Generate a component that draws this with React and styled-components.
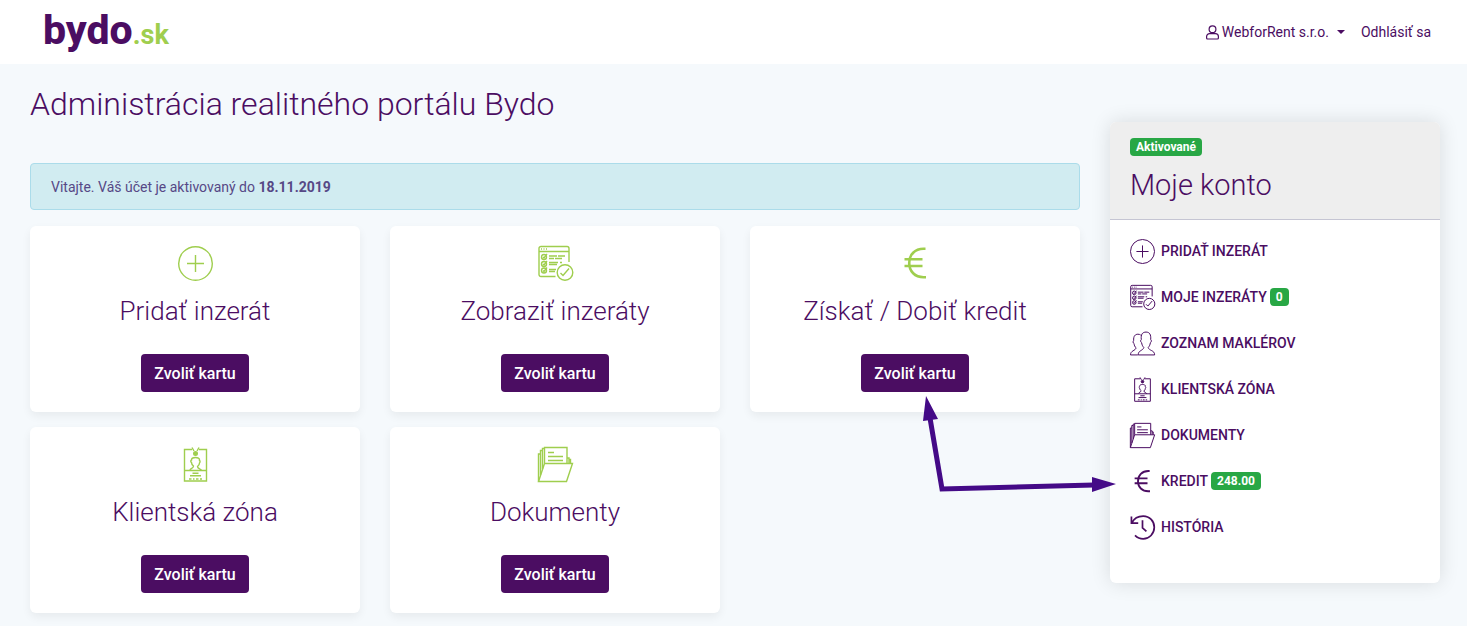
import React from 'react'
import styled, { createGlobalStyle } from 'styled-components'

const cards = [
  { id: 1, title: 'Pridať inzerát', icon: 'plus' },
  { id: 2, title: 'Zobraziť inzeráty', icon: 'list' },
  { id: 3, title: 'Získať / Dobiť kredit', icon: 'euro' },
  { id: 4, title: 'Klientská zóna', icon: 'badge' },
  { id: 5, title: 'Dokumenty', icon: 'folder' },
];

const menu = [
  { id: 1, label: 'Pridať inzerát', icon: 'plus' },
  { id: 2, label: 'Moje inzeráty', icon: 'list', count: '0' },
  { id: 3, label: 'Zoznam maklérov', icon: 'people' },
  { id: 4, label: 'Klientská zóna', icon: 'badge' },
  { id: 5, label: 'Dokumenty', icon: 'folder' },
  { id: 6, label: 'Kredit', icon: 'euro', count: '248.00' },
  { id: 7, label: 'História', icon: 'history' },
];

const shapes = {
  plus: (
    <>
      <circle cx="17.5" cy="17.5" r="16.8" />
      <path d="M17.5 9v17M9 17.5h17" />
    </>
  ),
  list: (
    <>
      <path d="M17.5 30.5H3a2 2 0 0 1-2-2v-26a2 2 0 0 1 2-2h26a2 2 0 0 1 2 2V16" />
      <path d="M1 5.5h30M3 3h1M5.5 3h1M8 3h1" />
      <circle cx="6" cy="11" r="2.5" />
      <circle cx="6" cy="18" r="2.5" />
      <circle cx="6" cy="24.5" r="2.5" />
      <path d="M5 11l1 1 3-4M5 18l1 1 3-4M5 24.5l1 1 3-4" />
      <path d="M11 10h8M20 10h7M11 12.5h5M17 12.5h7M11 16.5h9M22 16.5h2M11 18.5h8M11 23.5h7M11 25.5h6" />
      <circle cx="27" cy="26.5" r="7.8" />
      <path d="M22.5 27l2.5 2.5 6-7" />
    </>
  ),
  euro: (
    <path
      strokeWidth="2.6"
      d="M27.5 2.8h-2C17 2.8 11.2 8.5 11.2 17S17 31.2 25.5 31.2H28M6.5 13.2h18M6.5 20h18"
    />
  ),
  badge: (
    <>
      <path d="M14 2.5H6.5V34h22V2.5H21M6.5 23.5h22" />
      <path d="M14 .5l2 3.5M21 .5L19 4" />
      <circle cx="17.5" cy="6.5" r="1.8" fill="currentColor" />
      <path d="M12 23c.5-2 3.500-1.500 3.500-4-1.500-1-2-2-2-3.500-1.200-.5-.8-2.500 0-2.500 0-2 2-2.500 4-2.500s4.500.5 4 3c1 .5.500 2 0 2.500 0 1.500-.8 2.500-2 3.500 0 2.500 3.500 2 4 4" />
      <path d="M14.5 26.3h6M12 28.8h11M11 32h2.5M15 32h1.5M18 32h2.5M22 32h2" />
    </>
  ),
  folder: (
    <>
      <path d="M6.5 16.500h28l-6 18H.5zM6.500 16.500V.5H29v16" />
      <path d="M.5 34.500V7h2M2.500 28V3.500h2M4.500 22V1.500h2M29 11h2v5M31 12.500h1.500v4" />
      <path d="M10 5.5h6M10 9.5h15M10 13.5h15" />
    </>
  ),
  people: (
    <>
      <path d="M11.500 33.500h23c0-7-8-5.500-9-10.500 2-2 2.600-4 3-6.500 1.500-.5 2-4 .5-4.500C29.500 5 27.500 1.500 22.500 1.500S15 4.500 15.800 12c-1.500.5-1 4 .5 4.500.4 2.500 1 4.500 3 6.500-1 5-7.800 3.500-7.800 10.500z" />
      <path d="M11 33.500H.7c0-6.500 7-5.500 7.800-10-2-1.500-2.500-3.500-2.800-6-1.700-.5-2-3.500-.5-4C4.500 7 7.500 4.500 11 4.500c1.500 0 3 .3 4 1.200" />
    </>
  ),
  history: (
    <path
      strokeWidth="2.4"
      d="M2 2v9.500h9.500M2.500 11C5.500 5 11.500 1.500 18.500 1.500c9 0 15.500 7 15.500 15.800S27 33.500 18.500 33.500c-4.500 0-8.500-2-11.500-5M17.500 7.500V18l5.500 5"
    />
  ),
};

function Icon({ name, size }) {
  return (
    <IconSvg viewBox="0 0 35 35" $size={size} aria-hidden="true">
      {shapes[name]}
    </IconSvg>
  )
}

function Card({ card }) {
  return (
    <CardBox>
      <Icon name={card.icon} size={35} />
      <h2>{card.title}</h2>
      <CardButton type="button">Zvoliť kartu</CardButton>
    </CardBox>
  )
}

function Sidebar() {
  return (
    <SidebarBox>
      <SidebarHeader>
        <Badge>Aktivované</Badge>
        <h2>Moje konto</h2>
      </SidebarHeader>
      <Menu>
        {menu.map((item) => (
          <li key={item.id}>
            <MenuLink href="#">
              <Icon name={item.icon} size={25} />
              <span>{item.label}</span>
              {item.count && <Badge>{item.count}</Badge>}
            </MenuLink>
          </li>
        ))}
      </Menu>
    </SidebarBox>
  )
}

function App() {
  return (
    <>
      <GlobalStyle />
      <Header>
        <Logo href="#">bydo<span>.sk</span></Logo>
        <Nav>
          <UserButton type="button">
            <svg width="13" height="15" viewBox="0 0 13 15" fill="none" stroke="currentColor" strokeWidth="1.2" aria-hidden="true">
              <circle cx="6.5" cy="4.2" r="3.4" />
              <path d="M3.6 8.6h5.8a3 3 0 0 1 3 3V13a1 1 0 0 1-1 1H1.600a1 1 0 0 1-1-1v-1.400a3 3 0 0 1 3-3z" />
            </svg>
            WebforRent s.r.o.
            <Caret />
          </UserButton>
          <a href="#">Odhlásiť sa</a>
        </Nav>
      </Header>
      <Page>
        <Main>
          <h1>Administrácia realitného portálu Bydo</h1>
          <Alert role="alert">
            Vitajte. Váš účet je aktivovaný do <strong>18.11.2019</strong>
          </Alert>
          <Cards>
            {cards.map((card) => <Card key={card.id} card={card} />)}
          </Cards>
          <Pointer viewBox="0 0 204 100" aria-hidden="true">
            <path d="M14 22L26 93l152-4" fill="none" stroke="currentColor" strokeWidth="5" />
            <path d="M10 0l12 23-15 2zM200 88l-24 8V81z" fill="currentColor" />
          </Pointer>
        </Main>
        <Sidebar />
      </Page>
    </>
  )
}

const GlobalStyle = createGlobalStyle`
  *, *::before, *::after{
    box-sizing: border-box;
  }

  body{
    margin: 0;
    background: #f5f9fc;
    color: #4b0d62;
    font-family: Roboto, "Noto Sans", sans-serif;
    font-size: 14px;
    line-height: 20px;
  }

  h1, h2{
    margin: 0;
  }

  a{
    color: inherit;
    text-decoration: none;
  }
`

const IconSvg = styled.svg`
  display: block;
  flex: none;
  width: ${({ $size }) => $size}px;
  height: ${({ $size }) => $size}px;
  fill: none;
  stroke: currentColor;
  stroke-width: 1.4;
  overflow: visible;
`

const Header = styled.header`
  display: flex;
  align-items: center;
  justify-content: space-between;
  height: 64px;
  padding: 0 36px 0 43px;
  background: #fff;
`

const Logo = styled.a`
  font-size: 41px;
  font-weight: 800;
  line-height: 60px;

  span{
    color: #9fce4e;
    font-size: 27px;
    font-weight: 700;
  }
`

const Nav = styled.nav`
  display: flex;
  align-items: center;
  gap: 16px;
`

const UserButton = styled.button`
  display: flex;
  align-items: center;
  gap: 3px;
  padding: 0;
  border: 0;
  background: none;
  color: inherit;
  font: inherit;
  cursor: pointer;
`

const Caret = styled.span`
  margin-left: 5px;
  border-top: 4px solid;
  border-right: 4px solid transparent;
  border-left: 4px solid transparent;
`

const Page = styled.div`
  display: grid;
  grid-template-columns: minmax(0, 35fr) minmax(0, 11fr);
  align-items: start;
  gap: 30px;
  padding: 0 27px 12px 30px;
`

const Main = styled.main`
  position: relative;
  padding-top: 20px;

  h1{
    margin-bottom: 39px;
    font-size: 32px;
    font-weight: 300;
    line-height: 40px;
  }
`

const Alert = styled.div`
  margin-bottom: 16px;
  padding: 13px 20px 12px;
  border: 1px solid #abdcea;
  border-radius: 4px;
  background: #d1ecf1;
  color: #564886;
`

const Cards = styled.div`
  display: grid;
  grid-template-columns: repeat(3, minmax(0, 1fr));
  gap: 15px 30px;
`

const CardBox = styled.section`
  display: flex;
  flex-direction: column;
  align-items: center;
  padding: 20px;
  border-radius: 6px;
  background: #fff;
  box-shadow: 0 4px 10px rgba(0, 0, 0, 0.06);

  svg{
    color: #9fce4e;
  }

  h2{
    margin: 14px 0 27px;
    font-size: 26px;
    font-weight: 300;
    line-height: 32px;
  }
`

const CardButton = styled.button`
  height: 38px;
  padding: 0 13px;
  border: 0;
  border-radius: 4px;
  background: #4b0d62;
  color: #fff;
  font-family: inherit;
  font-size: 16px;
  font-weight: 500;
  cursor: pointer;
`

const SidebarBox = styled.aside`
  margin-top: 58px;
  border-radius: 6px;
  background: #fff;
  box-shadow: 0 0 20px rgba(0, 0, 0, 0.12);
`

const SidebarHeader = styled.div`
  padding: 16px 20px 15px;
  border-bottom: 1px solid #c5c5d3;
  border-radius: 6px 6px 0 0;
  background: #eee;

  h2{
    margin-top: 10px;
    font-size: 29px;
    font-weight: 300;
    line-height: 38px;
  }
`

const Badge = styled.span`
  display: block;
  width: fit-content;
  padding: 0 6px;
  border-radius: 4px;
  background: #28a745;
  color: #fff;
  font-size: 12px;
  font-weight: 700;
  line-height: 18px;
`

const Menu = styled.ul`
  margin: 0;
  padding: 8px 20px 33px;
  list-style: none;
`

const MenuLink = styled.a`
  display: flex;
  align-items: center;
  height: 46px;
  gap: 3px;
  font-weight: 500;
  text-transform: uppercase;

  svg{
    margin-right: 3px;
  }
`

const Pointer = styled.svg`
  position: absolute;
  top: 332px;
  right: -40px;
  width: 204px;
  height: 100px;
  color: #440a87;
  pointer-events: none;
  z-index: 1;
`

export default App;
